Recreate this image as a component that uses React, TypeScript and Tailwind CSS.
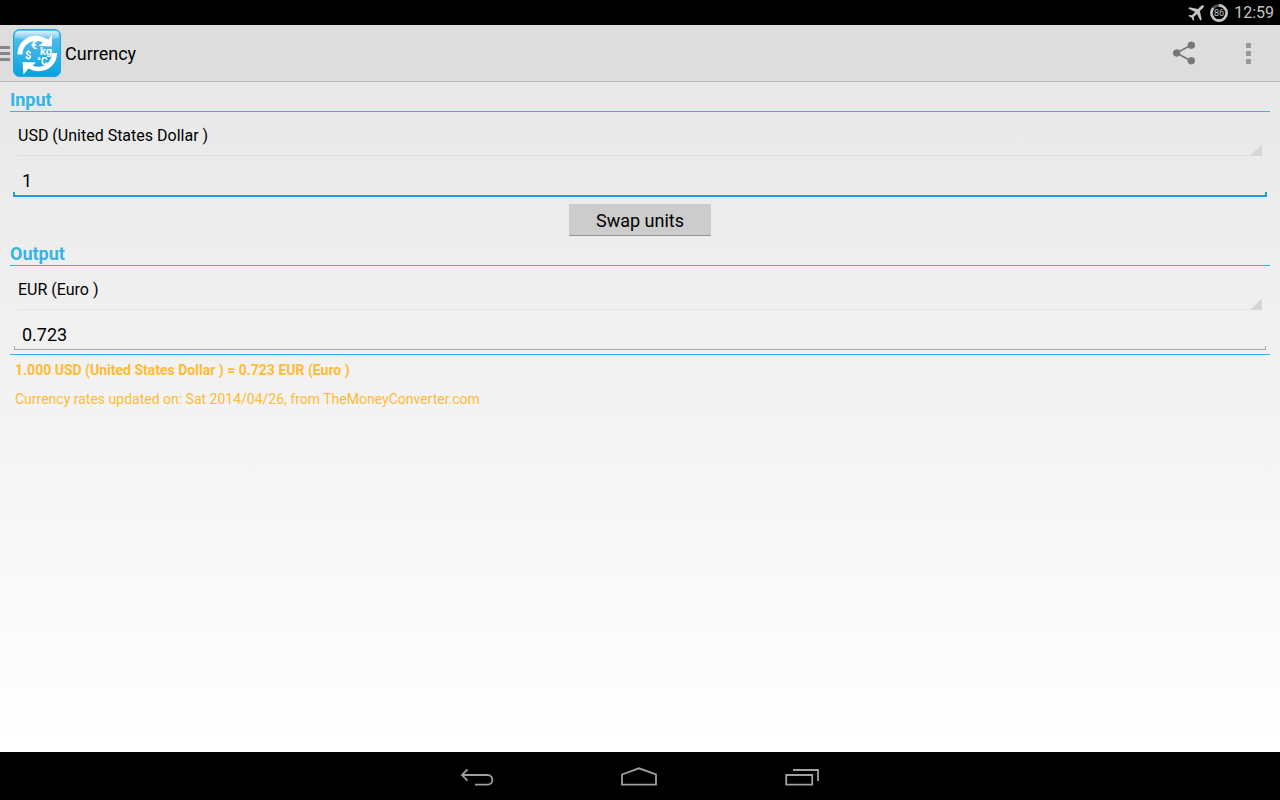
import React, { useState } from "react";
import clsx from "clsx";

const UNITS = [
  { code: "USD", label: "USD (United States Dollar )", perUsd: 1 },
  { code: "EUR", label: "EUR (Euro )", perUsd: 0.723 },
];

function StatusBar() {
  return (
    <div className="flex h-[25px] items-center justify-end bg-black pr-1.5 text-[#c4c4c4]">
      <svg className="mr-1.5 h-4 w-4" viewBox="0 0 16 16" fill="currentColor">
        <path d="M15.600.4c-.7-.6-2-.1-2.900.8L9.900 4.100 1.500 2.300.3 3.500 7.100 7 3.900 10.300 1.300 9.900.3 10.900 3.400 12.600 5.100 15.700 6.100 14.700 5.700 12.100 9 8.900 12.500 15.700 13.700 14.500 11.900 6.100 14.800 3.300c.9-.9 1.400-2.200.8-2.900z" />
      </svg>
      <svg className="mr-1.5 h-[18px] w-[18px]" viewBox="0 0 18 18">
        <circle cx="9" cy="9" r="7.600" fill="none" stroke="#555" strokeWidth="2.600" />
        <circle
          cx="9"
          cy="9"
          r="7.600"
          fill="none"
          stroke="currentColor"
          strokeWidth="2.600"
          strokeDasharray="41 47.750"
          transform="rotate(-90 9 9)"
        />
        <text
          x="9"
          y="12"
          fill="currentColor"
          textAnchor="middle"
          className="font-['Roboto',sans-serif] text-[9px]"
        >
          86
        </text>
      </svg>
      <span className="text-base leading-6">12:59</span>
    </div>
  );
}

function AppIcon() {
  return (
    <svg className="h-12 w-12" viewBox="0 0 48 48">
      <defs>
        <linearGradient id="tile" x1="0" y1="0" x2="0" y2="1">
          <stop offset="0" stopColor="#5cc0ea" />
          <stop offset="0.500" stopColor="#35b2e6" />
          <stop offset="1" stopColor="#06a3df" />
        </linearGradient>
        <linearGradient id="gloss" x1="0" y1="0" x2="0" y2="1">
          <stop offset="0" stopColor="#fff" stopOpacity="0.800" />
          <stop offset="1" stopColor="#fff" stopOpacity="0.050" />
        </linearGradient>
      </defs>
      <rect x="0.500" y="0.500" width="47" height="47" rx="6" fill="url(#tile)" stroke="#1fa6db" />
      <path d="M2 6q0-4 4-4h36q4 0 4 4v3Q24 14 2 9z" fill="url(#gloss)" />
      <g fill="#fff">
        <path d="M4.500 25.500C4.500 12.500 16 4.500 28 7.500L35.500 10.500 39 5.500 39 17.500 25.500 17 30 13.500C20 9 9.500 15 9.500 25.500z" />
        <path d="M44 24C44 37.500 32 44.500 20 41.500L15.500 39.500 10.500 45.500 9.500 33 23 33.500 19.500 36.500C29 40.500 38.500 34.500 39 24z" />
      </g>
      <g fill="#fff" className="font-['Roboto',sans-serif] font-bold">
        <text x="18" y="20" className="text-[11px]">€</text>
        <text x="12" y="30" className="text-[11px]">$</text>
        <text x="27" y="26" className="text-[11px]">kg</text>
        <text x="24" y="36" className="text-[10px]">°C</text>
      </g>
    </svg>
  );
}

function ActionBar() {
  return (
    <header className="flex h-[57px] items-center border-b border-[#b8b8b8] bg-[#dddddd]">
      <button aria-label="Open menu" className="flex w-[13px] flex-col gap-[3px]">
        <span className="h-[3px] w-2.5 bg-[#86868a]"></span>
        <span className="h-[3px] w-2.5 bg-[#86868a]"></span>
        <span className="h-[3px] w-2.5 bg-[#86868a]"></span>
      </button>
      <AppIcon />
      <h1 className="ml-1 flex-1 pt-px text-lg">Currency</h1>
      <button aria-label="Share" className="flex h-full w-16 items-center justify-center">
        <svg className="h-6 w-6" viewBox="0 0 24 24" fill="#777" stroke="#777">
          <path d="M19.300 4 4.500 12l14.800 8" fill="none" strokeWidth="1.700" />
          <circle cx="19.300" cy="4.200" r="3.300" />
          <circle cx="4.700" cy="12" r="3.300" />
          <circle cx="19.300" cy="19.800" r="3.300" />
        </svg>
      </button>
      <button aria-label="More options" className="flex h-full w-16 flex-col items-center justify-center gap-[3px]">
        <span className="h-[5px] w-[5px] bg-[#999999]"></span>
        <span className="h-[5px] w-[5px] bg-[#999999]"></span>
        <span className="h-[5px] w-[5px] bg-[#999999]"></span>
      </button>
    </header>
  );
}

function Section(props: any) {
  return (
    <section>
      <h2 className="h-[22px] border-b border-[#33b5e5] text-lg leading-5 font-bold text-[#33b5e5]">
        {props.title}
      </h2>
      {props.children}
    </section>
  );
}

function Spinner(props: any) {
  return (
    <div className="relative mx-2">
      <select
        aria-label={props.label}
        className="block h-11 w-full appearance-none border-b border-black/5 bg-transparent pt-1 text-base text-black outline-none"
        value={props.value}
        onChange={(e) => props.onChange(e.target.value)}
      >
        {UNITS.map((u) => (
          <option key={u.code} value={u.code}>
            {u.label}
          </option>
        ))}
      </select>
      <svg className="pointer-events-none absolute right-0 bottom-0 h-3 w-3" viewBox="0 0 12 12">
        <path d="M12 0v12H0z" fill="#d6d6d6" />
      </svg>
    </div>
  );
}

function EditField(props: any) {
  return (
    <div className="mx-1">
      <input
        type="text"
        aria-label={props.label}
        className="block h-9 w-full bg-transparent px-2 pt-3 text-lg text-black outline-none"
        value={props.value}
        readOnly={props.readOnly}
        onChange={(e) => props.onChange && props.onChange(e.target.value)}
      />
      <div
        className={clsx(
          "border-t-0",
          props.active ? "-mx-px h-[5px] border-2 border-[#1e9fd0]" : "h-1 border border-[#a6a6a6]"
        )}
      ></div>
    </div>
  );
}

function NavBar() {
  return (
    <nav className="flex h-12 shrink-0 justify-center bg-black">
      <button aria-label="Back" className="flex w-[162px] items-center justify-center">
        <svg className="h-6 w-10" viewBox="0 0 40 24" fill="none" stroke="#a0a0a0" strokeWidth="1.800">
          <path d="M9.500 5.300 4 11l5.500 5.700M4 11h25.500c6.500 0 6.500 9.700 0 9.700H17" />
        </svg>
      </button>
      <button aria-label="Home" className="flex w-[162px] items-center justify-center">
        <svg className="h-6 w-10" viewBox="0 0 40 24" fill="none" stroke="#a0a0a0" strokeWidth="1.800">
          <path d="M2 10.500 19 4.300l17 6.200v10.200H2z" />
        </svg>
      </button>
      <button aria-label="Recent apps" className="flex w-[162px] items-center justify-center">
        <svg className="h-6 w-10" viewBox="0 0 40 24" fill="none" stroke="#a0a0a0" strokeWidth="1.800">
          <path d="M4.200 11h26v9.700h-26zM11 6h25v11" />
        </svg>
      </button>
    </nav>
  );
}

export default function App() {
  const [from, setFrom] = useState("USD");
  const [to, setTo] = useState("EUR");
  const [amount, setAmount] = useState("1");

  const src = UNITS.find((u) => u.code === from) || UNITS[0];
  const dst = UNITS.find((u) => u.code === to) || UNITS[1];
  const value = Number(amount) || 0;
  const result = ((value / src.perUsd) * dst.perUsd).toFixed(3);

  const swap = () => {
    setFrom(to);
    setTo(from);
  };

  return (
    <div className="flex min-h-screen flex-col bg-white font-['Roboto',sans-serif] text-black">
      <StatusBar />
      <ActionBar />
      <main className="flex-1 bg-linear-to-b from-[#e8e8e8] to-white px-2.5 pt-2">
        <Section title="Input">
          <Spinner label="Input unit" value={from} onChange={setFrom} />
          <EditField label="Input amount" value={amount} onChange={setAmount} active />
        </Section>
        <div className="mt-[7px] mb-2 flex justify-center">
          <button
            className="h-8 w-[142px] rounded-[1px] border-b border-[#949494] bg-[#cccccc] pt-0.5 text-lg"
            onClick={swap}
          >
            Swap units
          </button>
        </div>
        <Section title="Output">
          <Spinner label="Output unit" value={to} onChange={setTo} />
          <EditField label="Output amount" value={result} readOnly />
        </Section>
        <div className="mt-1 border-t border-[#33b5e5] px-[5px] pt-px text-sm leading-[29px] text-[#ffbb33]">
          <p className="font-bold">
            {value.toFixed(3)} {src.label} = {result} {dst.label}
          </p>
          <p>Currency rates updated on: Sat 2014/04/26, from TheMoneyConverter.com</p>
        </div>
      </main>
      <NavBar />
    </div>
  );
}
